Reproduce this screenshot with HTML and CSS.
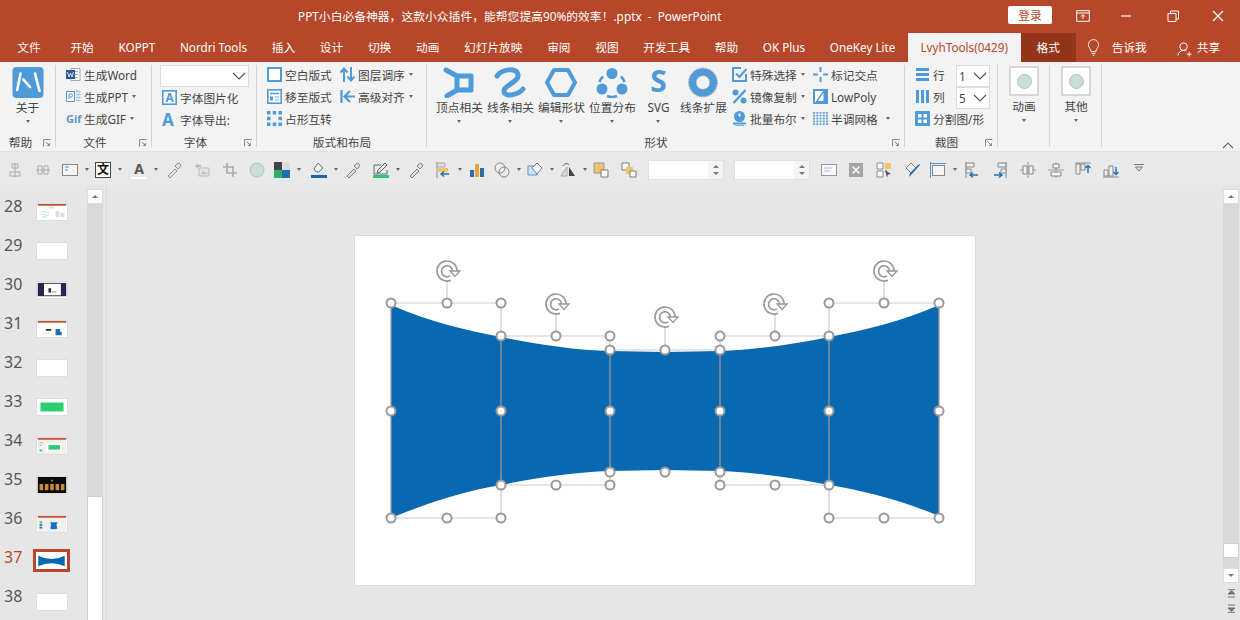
FILE: index.html
```html
<!DOCTYPE html>
<html lang="zh-CN">
  <head>
    <meta charset="UTF-8" />
    <title>PowerPoint</title>
    <link rel="stylesheet" href="styles.css">
  </head>
  <body>
    <!-- title bar -->
    <div class="titlebar">
      <span class="doc-title">PPT小白必备神器，这款小众插件，能帮您提高90%的效率！.pptx&nbsp; - &nbsp;PowerPoint</span>
      <span class="login">登录</span>
      <svg class="win win-a" viewBox="0 0 14 12"><path d="M.7.7h12.6v10.6H.7zM.7 3h12.6" fill="none" stroke="#fff"/><path d="M7 9V5M5 6.600 7 4.600l2 2" fill="none" stroke="#fff"/></svg>
      <svg class="win win-b" viewBox="0 0 14 12"><path d="M2 6h10" stroke="#fff" stroke-width="1.200"/></svg>
      <svg class="win win-c" viewBox="0 0 14 12"><path d="M2 3.500h8v8H2zM4.500 3.500V1h8v8H10" fill="none" stroke="#fff"/></svg>
      <svg class="win win-d" viewBox="0 0 12 12"><path d="M1 1l10 10M11 1 1 11" stroke="#fff" stroke-width="1.200"/></svg>
    </div>

    <!-- ribbon tabs -->
    <div class="tabs">
      <span class="tab tab-file">文件</span>
      <span class="tab">开始</span>
      <span class="tab">KOPPT</span>
      <span class="tab">Nordri Tools</span>
      <span class="tab">插入</span>
      <span class="tab">设计</span>
      <span class="tab">切换</span>
      <span class="tab">动画</span>
      <span class="tab">幻灯片放映</span>
      <span class="tab">审阅</span>
      <span class="tab">视图</span>
      <span class="tab">开发工具</span>
      <span class="tab">帮助</span>
      <span class="tab">OK Plus</span>
      <span class="tab">OneKey Lite</span>
      <span class="tab tab-active">LvyhTools(0429)</span>
      <span class="tab tab-format">格式</span>
      <svg class="tab-bulb" viewBox="0 0 14 18"><path d="M4.500 13.500C4.500 10.500 1.500 9.500 1.500 6a5.500 5.500 0 0 1 11 0c0 3.500-3 4.500-3 7.500zM5 15.500h4M6 17.300h2" fill="none" stroke="#fff"/></svg>
      <span class="tab-tell">告诉我</span>
      <svg class="tab-user" viewBox="0 0 16 16"><circle cx="7" cy="5.500" r="4" fill="none" stroke="#fff"/><path d="M1 15c.5-3.500 3-5.500 6-5.500 1 0 2 .2 2.800.7M10.500 13.500h5M13 11v5" fill="none" stroke="#fff"/></svg>
      <span class="tab-share">共享</span>
    </div>

    <!-- ribbon -->
    <div class="ribbon">
      <div class="group">
        <div class="group-body">
          <div class="big big-about">
            <svg class="big-icon" viewBox="0 0 31 31"><rect width="31" height="31" rx="4" fill="#4f9ad8"/><path d="M8 6.500 4.700 23M10.800 12.500l6.700 7.500M22.500 6.500 27 24" stroke="#fff" stroke-width="2.600" stroke-linecap="round" fill="none"/></svg>
            <span>关于</span>
            <i class="caret"></i>
          </div>
        </div>
        <div class="group-label label-help">帮助</div>
        <svg class="launcher" viewBox="0 0 8 8"><path d="M.5 7.500v-7h7M2.500 2.500l4 4M6.500 4v2.500H4" fill="none" stroke="#888"/></svg>
      </div>

      <div class="group">
        <div class="group-body pad-file">
          <div class="col">
            <div class="row">
              <svg class="ico" viewBox="0 0 15 15"><path d="M5 1.500h9v12H5z" fill="#fff" stroke="#9ab"/><path d="M8 4.500h4M8 7.500h4M8 10.500h4" stroke="#9ab"/><rect y="3" width="9" height="9" fill="#2b5797"/><path d="M1.500 5 3 10l1.500-4L6 10l1.500-5" fill="none" stroke="#fff" stroke-width=".8"/></svg>
              <span>生成Word</span>
            </div>
            <div class="row">
              <svg class="ico" viewBox="0 0 15 15"><path d="M.5 2.500h8v10h-8z" fill="#fff" stroke="#4f9ad8"/><path d="M3 10V5h2a1.300 1.300 0 0 1 0 3H3" fill="none" stroke="#4f9ad8"/><path d="M10 2.500h4.500M10 5.500h4.500M10 8.500h4.500M10 11.500h4.500" stroke="#9cc4e6" stroke-width="1.300"/></svg>
              <span>生成PPT</span><i class="caret caret-in"></i>
            </div>
            <div class="row">
              <span class="gif">Gif</span>
              <span>生成GIF</span><i class="caret caret-in"></i>
            </div>
          </div>
        </div>
        <div class="group-label label-left">文件</div>
        <svg class="launcher" viewBox="0 0 8 8"><path d="M.5 7.500v-7h7M2.500 2.500l4 4M6.500 4v2.500H4" fill="none" stroke="#888"/></svg>
      </div>

      <div class="group">
        <div class="group-body pad-font">
          <div class="combo combo-font">
            <svg class="chev" viewBox="0 0 14 8"><path d="M1 1l6 6 6-6" fill="none" stroke="#555" stroke-width="1.200"/></svg>
          </div>
          <div class="row row-font">
            <svg class="ico" viewBox="0 0 15 15"><rect x=".8" y=".8" width="13.400" height="13.400" fill="#fff" stroke="#4f9ad8" stroke-width="1.600"/></svg>
            <span class="ico-letter">A</span>
            <span>字体图片化</span>
          </div>
          <div class="row row-font">
            <span class="font-a">A</span>
            <span>字体导出:</span>
          </div>
        </div>
        <div class="group-label label-left">字体</div>
        <svg class="launcher" viewBox="0 0 8 8"><path d="M.5 7.500v-7h7M2.500 2.500l4 4M6.500 4v2.500H4" fill="none" stroke="#888"/></svg>
      </div>

      <div class="group">
        <div class="group-body pad-layout">
          <div class="col col-layout">
            <div class="row">
              <svg class="ico" viewBox="0 0 15 15"><rect x="1" y="1" width="13" height="13" fill="#fff" stroke="#4f9ad8" stroke-width="2"/></svg>
              <span>空白版式</span>
            </div>
            <div class="row">
              <svg class="ico" viewBox="0 0 15 15"><rect x=".8" y=".8" width="13.400" height="13.400" fill="#fff" stroke="#4f9ad8" stroke-width="1.600"/><path d="M3 4.500h9" stroke="#4f9ad8" stroke-width="1.500"/><path d="M3 7.500h3v4H3z" fill="#4f9ad8"/><path d="M8 8h4M8 11h4" stroke="#7d9fbc"/></svg>
              <span>移至版式</span>
            </div>
            <div class="row">
              <svg class="ico" viewBox="0 0 15 15"><path d="M0 0h3.500v3.500H0zM5.700 0h3.500v3.500H5.700zM11.500 0H15v3.500h-3.500zM0 5.700h3.500v3.500H0zM11.500 5.700H15v3.500h-3.500zM0 11.500h3.500V15H0zM5.700 11.500h3.500V15H5.700zM11.500 11.500H15V15h-3.500z" fill="#4f9ad8"/></svg>
              <span>占形互转</span>
            </div>
          </div>
          <div class="col">
            <div class="row">
              <svg class="ico" viewBox="0 0 15 15"><path d="M4 15V2M.5 5.500 4 1.500l3.500 4M11 0v13M7.500 9.500l3.500 4 3.500-4" fill="none" stroke="#4f9ad8" stroke-width="2"/></svg>
              <span>图层调序</span><i class="caret caret-in"></i>
            </div>
            <div class="row">
              <svg class="ico" viewBox="0 0 15 15"><path d="M1.500 1v13M15 7.500H5M10 2 4.500 7.500 10 13" fill="none" stroke="#4f9ad8" stroke-width="2.200"/></svg>
              <span>高级对齐</span><i class="caret caret-in"></i>
            </div>
          </div>
        </div>
        <div class="group-label">版式和布局</div>
      </div>

      <div class="group">
        <div class="group-body pad-shape">
          <div class="big-grid">
            <div class="big">
              <svg class="big-icon" viewBox="0 0 32 31"><path d="M3 3l11 6h14v14H14L4 29M14 9v14" fill="none" stroke="#4f9ad8" stroke-width="5" stroke-linecap="round" stroke-linejoin="round"/></svg>
              <span>顶点相关</span><i class="caret"></i>
            </div>
            <div class="big">
              <svg class="big-icon" viewBox="0 0 32 31"><path d="M3 9C8 2 23 0 24 8 25 15 10 18 10 24c0 7 14 4 19-2" fill="none" stroke="#4f9ad8" stroke-width="5" stroke-linecap="round"/></svg>
              <span>线条相关</span><i class="caret"></i>
            </div>
            <div class="big">
              <svg class="big-icon" viewBox="0 0 32 31"><path d="M9 3h14l7 12.500L23 28H9L2 15.500z" fill="none" stroke="#4f9ad8" stroke-width="4" stroke-linejoin="round"/></svg>
              <span>编辑形状</span><i class="caret"></i>
            </div>
            <div class="big">
              <svg class="big-icon" viewBox="0 0 32 31"><g fill="#4f9ad8"><circle cx="16" cy="6.500" r="5.500"/><circle cx="6" cy="22" r="5.500"/><circle cx="26" cy="22" r="5.500"/></g><path d="M7 9.500A14 14 0 0 0 3.500 15M25 9.500a14 14 0 0 1 3.500 5.500M11 29a14 14 0 0 0 10 0" fill="none" stroke="#4f9ad8" stroke-width="2.500"/></svg>
              <span>位置分布</span><i class="caret"></i>
            </div>
            <div class="big">
              <span class="svg-s">S</span>
              <span>SVG</span><i class="caret"></i>
            </div>
            <div class="big">
              <svg class="big-icon" viewBox="0 0 32 31"><circle cx="16" cy="15.500" r="14.200" fill="none" stroke="#a5a5a5" stroke-width="1.600" stroke-dasharray="1 .8"/><circle cx="16" cy="15.500" r="6.800" fill="none" stroke="#a5a5a5" stroke-width="1.200" stroke-dasharray="1 .8"/><circle cx="16" cy="15.500" r="10.500" fill="none" stroke="#4f9ad8" stroke-width="7"/></svg>
              <span>线条扩展</span>
            </div>
          </div>
          <div class="col col-special">
            <div class="row">
              <svg class="ico" viewBox="0 0 15 15"><path d="M14 7v7H1V1h8" fill="none" stroke="#4f9ad8" stroke-width="2"/><path d="M4 6.500 7.500 10 14.500 2" fill="none" stroke="#4f9ad8" stroke-width="2"/></svg>
              <span>特殊选择</span><i class="caret caret-in"></i>
            </div>
            <div class="row">
              <svg class="ico" viewBox="0 0 15 15"><circle cx="3.500" cy="3.500" r="3" fill="#4f9ad8"/><circle cx="11.500" cy="11.500" r="3" fill="#4f9ad8"/><path d="M13.500 1 1.500 14" stroke="#4f9ad8" stroke-width="2.400"/></svg>
              <span>镜像复制</span><i class="caret caret-in"></i>
            </div>
            <div class="row">
              <svg class="ico" viewBox="0 0 15 15"><circle cx="7.500" cy="5.500" r="5.500" fill="#4f9ad8"/><path d="M7.500 2.500v3" stroke="#fff" stroke-width="2"/><path d="M1 12.500h13" stroke="#4f9ad8" stroke-width="2"/><path d="M3 14.800h9" stroke="#4f9ad8"/></svg>
              <span>批量布尔</span><i class="caret caret-in"></i>
            </div>
          </div>
          <div class="col">
            <div class="row">
              <svg class="ico" viewBox="0 0 15 15"><path d="M7.500 0v5M7.500 10v5M0 7.500h5M10 7.500h5" stroke="#4f9ad8" stroke-width="2"/></svg>
              <span>标记交点</span>
            </div>
            <div class="row">
              <svg class="ico" viewBox="0 0 15 15"><rect x="1" y="1" width="13" height="13" fill="#fff" stroke="#4f9ad8" stroke-width="2"/><path d="M2 14 10 2h4v12z" fill="#4f9ad8"/><path d="M5 12 10.500 4v8z" fill="#fff"/></svg>
              <span>LowPoly</span>
            </div>
            <div class="row">
              <svg class="ico" viewBox="0 0 15 15"><path d="M1 1v13M4.300 1v13M7.500 1v13M10.800 1v13M14 1v13" stroke="#4f9ad8" stroke-width="1.800" stroke-dasharray="1.800 1"/></svg>
              <span>半调网格</span><i class="caret caret-far"></i>
            </div>
          </div>
        </div>
        <div class="group-label label-shape">形状</div>
        <svg class="launcher" viewBox="0 0 8 8"><path d="M.5 7.500v-7h7M2.500 2.500l4 4M6.500 4v2.500H4" fill="none" stroke="#888"/></svg>
      </div>

      <div class="group">
        <div class="group-body pad-crop">
          <div class="col">
            <div class="crop-row">
              <div class="row">
                <svg class="ico" viewBox="0 0 15 15"><path d="M1 1h13v3H1zM1 6h13v3H1zM1 11h13v3H1z" fill="#4f9ad8"/></svg>
                <span>行</span>
              </div>
              <div class="combo combo-num"><span>1</span><svg class="chev" viewBox="0 0 14 8"><path d="M1 1l6 6 6-6" fill="none" stroke="#555" stroke-width="1.200"/></svg></div>
            </div>
            <div class="crop-row">
              <div class="row">
                <svg class="ico" viewBox="0 0 15 15"><path d="M1 1h3v13H1zM6 1h3v13H6zM11 1h3v13h-3z" fill="#4f9ad8"/></svg>
                <span>列</span>
              </div>
              <div class="combo combo-num"><span>5</span><svg class="chev" viewBox="0 0 14 8"><path d="M1 1l6 6 6-6" fill="none" stroke="#555" stroke-width="1.200"/></svg></div>
            </div>
            <div class="row">
              <svg class="ico" viewBox="0 0 15 15"><rect width="15" height="15" rx="1" fill="#4f9ad8"/><path d="M3 3h3.500v3.500H3zM8.500 3H12v3.500H8.500zM3 8.500h3.500V12H3zM8.500 8.500H12V12H8.500z" fill="#fff"/></svg>
              <span>分割图/形</span>
            </div>
          </div>
        </div>
        <div class="group-label label-crop">裁图</div>
        <svg class="launcher" viewBox="0 0 8 8"><path d="M.5 7.500v-7h7M2.500 2.500l4 4M6.500 4v2.500H4" fill="none" stroke="#888"/></svg>
      </div>

      <div class="group group-swatch">
        <div class="swatch"><i></i></div>
        <span>动画</span>
        <i class="caret"></i>
      </div>
      <div class="group group-swatch">
        <div class="swatch"><i></i></div>
        <span>其他</span>
        <i class="caret"></i>
      </div>
      <div class="ribbon-end">
        <svg class="collapse" viewBox="0 0 12 7"><path d="M1 6l5-5 5 5" fill="none" stroke="#666" stroke-width="1.100"/></svg>
      </div>
    </div>

    <!-- quick access bar -->
    <div class="quick">
      <div class="qb"><svg viewBox="0 0 16 16"><path d="M8 1v14M5 2h6v4H5zM3 10h10v4H3z" fill="none" stroke="#aaa"/></svg></div>
      <div class="qb"><svg viewBox="0 0 16 16"><path d="M1 8h14M3 4h4v8H3zM9 4h4v8H9z" fill="#eee" stroke="#aaa"/></svg></div>
      <div class="qb"><svg viewBox="0 0 16 16"><rect x=".5" y="2.500" width="15" height="11" fill="#f4f4f4" stroke="#888"/><path d="M3 5h4M3 8h3" stroke="#4f9ad8"/></svg><i class="caret"></i></div>
      <div class="qb"><span class="qb-text">文</span><i class="caret"></i></div>
      <div class="qb"><span class="qb-a">A</span><i class="caret"></i></div>
      <div class="qb"><svg viewBox="0 0 16 16"><path d="M2 14l7-7 2 2-7 7zM9 4l3 3 2-2a1.500 1.500 0 0 0-3-3z" fill="#e4e4e4" stroke="#777" stroke-width=".8"/></svg></div>
      <div class="qb"><svg viewBox="0 0 16 16"><path d="M5 6h10v8H5z" fill="#e3e3e3" stroke="#bbb"/><path d="M7 12l2-3 2 2 1-1 2 2zM1 4l3-3v2h3v2H4v2z" fill="#bbb"/></svg></div>
      <div class="qb"><svg viewBox="0 0 16 16"><path d="M5 1v10h10M1 5h10v10" fill="none" stroke="#aaa" stroke-width="1.600"/></svg></div>
      <div class="qb"><svg viewBox="0 0 16 16"><circle cx="8" cy="8" r="7" fill="#c9ded4" stroke="#aec5bb"/></svg></div>
      <div class="qb"><svg viewBox="0 0 16 16"><path d="M0 0h8v8H0z" fill="#444"/><path d="M8 0h8v8H8z" fill="#ddd"/><path d="M0 8h8v8H0z" fill="#2fae6a"/><path d="M8 8h8v8H8z" fill="#1c6fb5"/></svg><i class="caret"></i></div>
      <div class="qb"><svg viewBox="0 0 16 16"><path d="M7 1l5 5-4 4H5L3 7z" fill="#eee" stroke="#777"/><path d="M0 13h16v3H0z" fill="#1465ad"/></svg><i class="caret"></i></div>
      <div class="qb"><svg viewBox="0 0 16 16"><path d="M2 14l7-7 2 2-7 7zM9 4l3 3 2-2a1.500 1.500 0 0 0-3-3z" fill="#ddd" stroke="#666" stroke-width=".8"/></svg></div>
      <div class="qb"><svg viewBox="0 0 16 16"><path d="M12 1l2 2-7 7-3 1 1-3zM1 3h7M1 3v9h13V8" fill="none" stroke="#666"/><path d="M0 13h16v3H0z" fill="#2fc46f"/></svg><i class="caret"></i></div>
      <div class="qb"><svg viewBox="0 0 16 16"><path d="M2 14l7-7 2 2-7 7zM9 4l3 3 2-2a1.500 1.500 0 0 0-3-3z" fill="#ddd" stroke="#666" stroke-width=".8"/></svg></div>
      <div class="qb"><svg viewBox="0 0 16 16"><path d="M2 0v16" stroke="#888"/><path d="M2 1h8v4H2z" fill="#ddd" stroke="#aaa"/><path d="M2 6h11v4H2z" fill="#f0c36d"/><path d="M14 12H6M9 9.500 6 12l3 2.500" fill="none" stroke="#1c6fb5" stroke-width="1.400"/></svg><i class="caret"></i></div>
      <div class="qb"><svg viewBox="0 0 16 16"><path d="M1 8h4v7H1zM11 6h4v9h-4z" fill="#2f6fa8"/><path d="M6 2h4v13H6z" fill="#e8a23a"/></svg></div>
      <div class="qb"><svg viewBox="0 0 16 16"><circle cx="6" cy="6" r="5" fill="#eee" stroke="#888"/><circle cx="10" cy="10" r="5" fill="none" stroke="#888"/></svg><i class="caret"></i></div>
      <div class="qb"><svg viewBox="0 0 16 16"><path d="M1 4h9v9H1z" fill="#cfe2f3" stroke="#4f9ad8"/><path d="M10 1l5 5-5 6-5-6z" fill="#fff" stroke="#777"/></svg><i class="caret"></i></div>
      <div class="qb"><svg viewBox="0 0 16 16"><path d="M7 5v9H1z" fill="#ddd" stroke="#aaa"/><path d="M9 5v9h6z" fill="#444"/><path d="M3 4c1-3 5-3 6-1" fill="none" stroke="#1c6fb5"/></svg><i class="caret"></i></div>
      <div class="qb"><svg viewBox="0 0 16 16"><path d="M1 1h10v10H1z" fill="#f0c36d" stroke="#999"/><path d="M8 8h7v7H8z" fill="#fff" stroke="#777"/></svg></div>
      <div class="qb"><svg viewBox="0 0 16 16"><path d="M1 1h7v7H1z" fill="#fff" stroke="#777"/><path d="M5 5h7v7H5z" fill="#f0c36d"/><path d="M9 9h6v6H9z" fill="#fff" stroke="#777"/></svg></div>
      <div class="spin"><i></i><div class="spin-btn"><b class="up"></b><b class="down"></b></div></div>
      <div class="spin"><i></i><div class="spin-btn"><b class="up"></b><b class="down"></b></div></div>
      <div class="qb"><svg viewBox="0 0 16 16"><rect x=".5" y="2.500" width="15" height="11" fill="#f7f7f7" stroke="#999"/><path d="M3 6h8M3 9h6" stroke="#a9c6df"/></svg></div>
      <div class="qb"><svg viewBox="0 0 16 16"><rect x="1" y="1" width="14" height="14" fill="#a5a5a5"/><path d="M4.500 4.500l7 7M11.500 4.500l-7 7" stroke="#fff" stroke-width="1.500"/></svg></div>
      <div class="qb"><svg viewBox="0 0 16 16"><path d="M1 1h6v6H1zM1 9h6v6H1zM9 9h2" fill="#fff" stroke="#888"/><path d="M9 1h6v6H9z" fill="#f0c36d"/><path d="M9 8l6 4-3 .5-1 3z" fill="#555"/></svg></div>
      <div class="qb"><svg viewBox="0 0 16 16"><path d="M6 1 1 6l5 5 5-5z" fill="#eee" stroke="#777"/><path d="M15 3 7 12l-3 3 1-4 9-9z" fill="#2f6fa8"/></svg></div>
      <div class="qb"><svg viewBox="0 0 16 16"><rect x="2.500" y="3.500" width="12" height="10" fill="#f5f5f5" stroke="#888"/><path d="M0 1.500h16M.5 0v16" stroke="#4f9ad8"/></svg><i class="caret"></i></div>
      <div class="qb"><svg viewBox="0 0 16 16"><path d="M2 0v16" stroke="#888"/><path d="M2 1h8v4H2zM2 7h5v4H2z" fill="#eee" stroke="#888"/><path d="M14 13H6M9 10.500 6 13l3 2.500" fill="none" stroke="#1c6fb5" stroke-width="1.400"/></svg></div>
      <div class="qb"><svg viewBox="0 0 16 16"><path d="M14 0v16" stroke="#888"/><path d="M6 1h8v4H6zM9 7h5v4H9z" fill="#eee" stroke="#888"/><path d="M2 13h8M7 10.500 10 13l-3 2.500" fill="none" stroke="#1c6fb5" stroke-width="1.400"/></svg></div>
      <div class="qb"><svg viewBox="0 0 16 16"><path d="M8 0v16M0 8h3M13 8h3" stroke="#999"/><path d="M3 4h4v8H3zM9 4h4v8H9z" fill="#f2f2f2" stroke="#888"/></svg></div>
      <div class="qb"><svg viewBox="0 0 16 16"><path d="M8 0v16M0 8h16" stroke="#999"/><path d="M5 2h6v4H5zM3 10h10v4H3z" fill="#f2f2f2" stroke="#888"/></svg></div>
      <div class="qb"><svg viewBox="0 0 16 16"><path d="M0 1h16" stroke="#888"/><path d="M1 2h4v10H1zM6 2h4v6H6z" fill="#eee" stroke="#888"/><path d="M13 11V4M10.500 6 13 3.500 15.500 6" fill="none" stroke="#1c6fb5" stroke-width="1.400"/></svg></div>
      <div class="qb"><svg viewBox="0 0 16 16"><path d="M0 15h16" stroke="#888"/><path d="M1 8h4v6H1zM6 4h4v10H6z" fill="#eee" stroke="#888"/><path d="M13 5v7M10.500 10 13 12.500 15.500 10" fill="none" stroke="#1c6fb5" stroke-width="1.400"/></svg></div>
      <div class="qb"><svg class="qb-more" viewBox="0 0 10 8"><path d="M0 .5h10M1.500 3h7L5 7z" fill="none" stroke="#777"/></svg></div>
    </div>

    <!-- slide panel, stage -->
    <div class="main">
      <div class="thumbs">
        <div class="thumb-row"><span class="num">28</span>
          <svg class="thumb" viewBox="0 0 32 18"><path d="M0 0h32v2H0z" fill="#c0573a"/><path d="M3 9q3-2 5 0t5 0M3 12q3-2 5 0t5 0M5 15q3-2 5 0" fill="none" stroke="#8fdcae" stroke-width=".8"/><path d="M20 8h4v7h-4zM25 10h5v5h-5zM13 3h5v2h-5z" fill="#ddd"/></svg>
        </div>
        <div class="thumb-row"><span class="num">29</span><svg class="thumb" viewBox="0 0 32 18"></svg></div>
        <div class="thumb-row"><span class="num">30</span>
          <svg class="thumb" viewBox="0 0 32 18"><path d="M0 1h32v15H0z" fill="#25264f"/><path d="M7 2h19v13H7z" fill="#fff"/><path d="M12 7h3v5h-3z" fill="#333"/><path d="M16 10h5v2h-5z" fill="#bbb"/></svg>
        </div>
        <div class="thumb-row"><span class="num">31</span>
          <svg class="thumb" viewBox="0 0 32 18"><path d="M0 0h32v2H0z" fill="#c0573a"/><path d="M9 9h6v2H9z" fill="#3a2a10"/><path d="M20 9h5v7h-5z" fill="#1c6fb5"/><path d="M25 12h2v4h-2z" fill="#1c6fb5"/><path d="M5 13h11v1H5z" fill="#ddd"/></svg>
        </div>
        <div class="thumb-row"><span class="num">32</span><svg class="thumb" viewBox="0 0 32 18"></svg></div>
        <div class="thumb-row"><span class="num">33</span>
          <svg class="thumb" viewBox="0 0 32 18"><path d="M3 4h26v10H3z" fill="#2ecc71"/></svg>
        </div>
        <div class="thumb-row"><span class="num">34</span>
          <svg class="thumb" viewBox="0 0 32 18"><path d="M0 0h32v18H0z" fill="#efefef"/><path d="M0 0h32v2H0z" fill="#c0573a"/><path d="M9 6h18v10H9z" fill="#fff"/><path d="M12 8h13v5H12z" fill="#2ecc71"/><path d="M2 13h3v2H2z" fill="#2ecc71"/><path d="M2 5h4v1H2zM2 8h2v1H2z" fill="#aaa"/></svg>
        </div>
        <div class="thumb-row"><span class="num">35</span>
          <svg class="thumb" viewBox="0 0 32 18"><path d="M0 0h32v18H0z" fill="#0c0a06"/><path d="M2 8h4v7H2zM8 8h4v7H8zM14 8h4v7h-4zM20 8h4v7h-4zM26 8h4v7h-4z" fill="#c98a3a"/><path d="M15 3h2v2h-2z" fill="#c98a3a"/></svg>
        </div>
        <div class="thumb-row"><span class="num">36</span>
          <svg class="thumb" viewBox="0 0 32 18"><path d="M0 0h32v18H0z" fill="#efefef"/><path d="M0 0h32v2H0z" fill="#c0573a"/><path d="M14 7h8l-1 3 1 4q-4 2-8 0l1-4z" fill="#1c6fb5"/><path d="M2 9h3v2H2zM2 12h3v2H2z" fill="#1c6fb5"/><path d="M2 6h3v2H2z" fill="#2ecc71"/></svg>
        </div>
        <div class="thumb-row"><span class="num num-on">37</span>
          <div class="thumb-on">
            <svg viewBox="0 0 32 18"><path d="M2 4Q16 11 30 4V15Q16 9 2 15z" fill="#0868b0"/></svg>
          </div>
        </div>
        <div class="thumb-row"><span class="num">38</span><svg class="thumb" viewBox="0 0 32 18"></svg></div>
      </div>

      <div class="vbar vbar-left">
        <div class="vbtn"><b class="up"></b></div>
        <div class="vtrack vtrack-left"></div>
        <div class="vthumb vthumb-left"></div>
      </div>

      <div class="stage">
        <svg class="slide" viewBox="355 236 620 349">
          <defs>
            <g id="rot">
              <path d="M10 0A10 10 0 1 0 4 9.200M5.500 0A5.500 5.500 0 1 0 3 4.900" fill="none" stroke="#999" stroke-width="1.700"/>
              <path d="M3 0h10L8 5.500z" fill="#fff" stroke="#999" stroke-width="1.300"/>
            </g>
            <circle id="h" r="4.500" fill="#fff" stroke="#999" stroke-width="2"/>
          </defs>

          <path d="M391 305C430 322 465 330 501 337 535 344 575 350 610 351L665 352 720 351C755 350 795 344 829 337 865 330 900 322 939 305V516C900 500 865 491 829 485 795 478 755 472 720 471L665 470 610 471C575 472 535 478 501 485 465 491 430 502 391 518Z" fill="#0868b0"/>

          <g fill="none" stroke="#ccc" stroke-width="1.200">
            <path d="M391 303H501V337M447 303V280M391 518H501V485M501 336H610V350M556 336V314M501 485H610V472M610 350H720V336M665 350V327M829 303H939M884 303V280M829 303V337M829 518H939M829 518V485M720 336H829M775 336V314M720 485H829M720 472V485"/>
          </g>
          <g fill="none" stroke="#9a9a9a" stroke-width="1.300">
            <path d="M391 305V518M501 337V485M610 350V472M720 350V472M829 337V485M939 305V518"/>
          </g>

          <use href="#rot" x="447" y="271"/>
          <use href="#rot" x="556" y="304"/>
          <use href="#rot" x="665" y="317"/>
          <use href="#rot" x="774" y="304"/>
          <use href="#rot" x="884" y="271"/>

          <use href="#h" x="391" y="303"/><use href="#h" x="447" y="303"/><use href="#h" x="501" y="303"/>
          <use href="#h" x="391" y="411"/><use href="#h" x="501" y="411"/>
          <use href="#h" x="391" y="518"/><use href="#h" x="447" y="518"/><use href="#h" x="501" y="518"/>
          <use href="#h" x="501" y="336"/><use href="#h" x="556" y="336"/><use href="#h" x="610" y="336"/>
          <use href="#h" x="610" y="411"/>
          <use href="#h" x="501" y="485"/><use href="#h" x="556" y="485"/><use href="#h" x="610" y="485"/>
          <use href="#h" x="610" y="350"/><use href="#h" x="665" y="350"/><use href="#h" x="720" y="350"/>
          <use href="#h" x="720" y="411"/>
          <use href="#h" x="610" y="472"/><use href="#h" x="665" y="472"/><use href="#h" x="720" y="472"/>
          <use href="#h" x="720" y="336"/><use href="#h" x="775" y="336"/><use href="#h" x="829" y="336"/>
          <use href="#h" x="829" y="411"/>
          <use href="#h" x="720" y="485"/><use href="#h" x="775" y="485"/><use href="#h" x="829" y="485"/>
          <use href="#h" x="829" y="303"/><use href="#h" x="884" y="303"/><use href="#h" x="939" y="303"/>
          <use href="#h" x="939" y="411"/>
          <use href="#h" x="829" y="518"/><use href="#h" x="884" y="518"/><use href="#h" x="939" y="518"/>
        </svg>
      </div>

      <div class="vbar vbar-right">
        <div class="vbtn"><b class="up"></b></div>
        <div class="vtrack vtrack-right"></div>
        <div class="vthumb vthumb-right"></div>
        <div class="vtrack vtrack-gap"></div>
        <div class="vbtn"><b class="down"></b></div>
        <svg class="vjump" viewBox="0 0 9 9"><path d="M1 .7h7M4.500 1.500 8 5H1zM1 8h7" fill="#777" stroke="#777"/></svg>
        <svg class="vjump" viewBox="0 0 9 9"><path d="M1 8.300h7M4.500 7.500 8 4H1zM1 1h7" fill="#777" stroke="#777"/></svg>
      </div>
    </div>
  </body>
</html>
```

FILE: styles.css
```css
* {
  margin: 0;
  padding: 0;
  box-sizing: border-box;
}
html,
body {
  height: 620px;
  overflow: hidden;
}
body {
  font-family: "Noto Sans", "Noto Sans CJK SC", sans-serif;
  font-size: 11.7px;
  color: #444;
  background: #e6e6e6;
}
i,
b {
  display: block;
}

/* title bar */
.titlebar {
  display: flex;
  align-items: center;
  height: 31px;
  background: #b7472a;
  color: #fff;
  padding-left: 298px;
}
.doc-title {
  width: 710px;
  font-size: 11.8px;
  white-space: nowrap;
}
.login {
  width: 44px;
  height: 18px;
  margin-top: -1px;
  background: #fff;
  border-radius: 2px;
  color: #b7472a;
  text-align: center;
  line-height: 18px;
}
.win {
  width: 14px;
  height: 12px;
  flex: none;
}
.win-a {
  margin-left: 24px;
}
.win-b {
  margin-left: 29px;
}
.win-c {
  margin-left: 33px;
}
.win-d {
  margin-left: 31px;
}

/* tabs */
.tabs {
  display: flex;
  align-items: flex-end;
  height: 31px;
  background: #b7472a;
  color: #fff;
  white-space: nowrap;
}
.tab {
  height: 29px;
  line-height: 29px;
  padding: 0 12.35px;
}
.tab-file {
  margin: 0 5px;
}
.tab-active {
  width: 113px;
  padding: 0;
  text-align: center;
  background: #f3f3f3;
  color: #b7472a;
}
.tab-format {
  width: 55px;
  padding: 0;
  text-align: center;
  background: #933518;
}
.tab-bulb {
  width: 13px;
  height: 17px;
  margin: 0 0 6px 11px;
}
.tab-tell {
  height: 29px;
  line-height: 29px;
  margin-left: 12px;
}
.tab-user {
  width: 15px;
  height: 16px;
  margin: 0 0 5px 30px;
}
.tab-share {
  height: 29px;
  line-height: 29px;
  margin-left: 5px;
}

/* ribbon */
.ribbon {
  display: grid;
  grid-template-columns: 56px 96px 105px 170px 478px 93px 52px 52px 1fr;
  height: 90px;
  padding-top: 2px;
  background: #f3f3f3;
  border-bottom: 1px solid #e2e2e2;
}
.group {
  position: relative;
  display: flex;
  flex-direction: column;
}
.group::after {
  content: "";
  position: absolute;
  right: 0;
  top: 1px;
  bottom: 4px;
  width: 1px;
  background: #d4d4d4;
}
.group-body {
  display: flex;
  height: 69px;
}
.group-label {
  text-align: center;
  line-height: 18px;
}
.label-help {
  padding-right: 15px;
}
.label-left {
  padding-right: 18px;
}
.label-shape {
  padding-right: 20px;
}
.label-crop {
  padding-right: 10px;
}
.launcher {
  position: absolute;
  right: 5px;
  bottom: 4px;
  width: 8px;
  height: 8px;
}
.row {
  display: flex;
  align-items: center;
  height: 22px;
  line-height: 20px;
  padding-bottom: 1px;
  white-space: nowrap;
}
.ico {
  width: 15px;
  height: 15px;
  margin-right: 3px;
  flex: none;
}
.col {
  display: flex;
  flex-direction: column;
}
.caret {
  width: 0;
  height: 0;
  border: 2.5px solid transparent;
  border-top: 3px solid #666;
  border-bottom: 0;
}
.caret-in {
  margin-left: 4px;
}
.caret-far {
  margin-left: 8px;
}
.big {
  display: flex;
  flex-direction: column;
  align-items: center;
  padding-top: 3px;
  white-space: nowrap;
}
.big span {
  height: 19px;
  line-height: 19px;
}
.big .caret {
  margin-top: 3px;
}
.big-icon {
  width: 32px;
  height: 31px;
}
.big-about {
  width: 55px;
}
.gif {
  width: 18px;
  color: #5f97c5;
  font-weight: 700;
  font-size: 11px;
}
.pad-file {
  padding-left: 10px;
}
.pad-font {
  flex-direction: column;
  padding-left: 8px;
}
.combo {
  position: relative;
  display: flex;
  align-items: center;
  background: #fff;
  border: 1px solid #dcdcdc;
}
.combo-font {
  width: 89px;
  height: 22px;
  margin-top: 1px;
  flex: none;
}
.chev {
  position: absolute;
  right: 2px;
  width: 14px;
  height: 8px;
}
.row-font {
  position: relative;
  margin-left: 2px;
}
.ico-letter {
  position: absolute;
  left: 3.500px;
  top: 2px;
  font-weight: 700;
  color: #4f9ad8;
  line-height: 17px;
}
.font-a {
  width: 18px;
  font-size: 17px;
  line-height: 20px;
  font-weight: 700;
  color: #4f9ad8;
}
.pad-layout {
  padding-left: 10px;
}
.col-layout {
  width: 73px;
}
.pad-shape {
  padding-left: 7px;
}
.big-grid {
  display: grid;
  grid-template-columns: 51px 51px 51px 51px 41px 49px;
  justify-items: center;
}
.big .svg-s {
  font-size: 30px;
  font-weight: 700;
  color: #4f9ad8;
  height: 31px;
  line-height: 28px;
}
.col-special {
  width: 81px;
  margin-left: 4px;
}
.pad-crop {
  padding-left: 10px;
}
.crop-row {
  display: flex;
  align-items: center;
  height: 22px;
  width: 75px;
  justify-content: space-between;
}
.combo-num {
  width: 34px;
  height: 22px;
  margin-top: 2px;
  padding-left: 2px;
}
.group-swatch {
  align-items: center;
  padding-top: 2px;
}
.group-swatch span {
  line-height: 20px;
}
.group-swatch .caret {
  margin-top: 3px;
}
.swatch {
  display: flex;
  align-items: center;
  justify-content: center;
  width: 30px;
  height: 30px;
  background: #fff;
  border: 2px solid #d6d6d6;
}
.swatch i {
  width: 15px;
  height: 15px;
  border-radius: 50%;
  background: #c9ded4;
  border: 1px solid #aec5bb;
}
.ribbon-end {
  display: flex;
  align-items: flex-end;
  justify-content: flex-end;
  padding: 0 6px 2px 0;
}
.collapse {
  width: 12px;
  height: 7px;
}

/* quick access bar */
.quick {
  display: grid;
  grid-template-columns: 28px 27px 33px 36px 35px 28px 28px 27px 25px 37px 34px 28px 35px 27px 34px 25px 33px 33px 33px 28px 33px 86px 81px 27px 28px 29px 25px 34px 28px 28px 28px 27px 28px 28px 28px;
  align-items: center;
  height: 33px;
  padding: 2px 0 0 1px;
  background: #e9e9e9;
}
.qb {
  display: flex;
  align-items: center;
  height: 20px;
  padding-left: 6px;
}
.qb svg {
  width: 16px;
  height: 16px;
  flex: none;
}
.qb .caret {
  margin-left: 7px;
  flex: none;
}
.qb svg.qb-more {
  width: 10px;
  height: 8px;
  margin: -4px 0 0 3px;
}
.qb-text {
  width: 16px;
  height: 16px;
  flex: none;
  border: 1px solid #444;
  background: #fff;
  color: #111;
  font-weight: 700;
  font-size: 12px;
  line-height: 14px;
  text-align: center;
}
.qb-a {
  width: 16px;
  flex: none;
  text-align: center;
  font-size: 14px;
  font-weight: 700;
  line-height: 16px;
  color: #555;
  border-bottom: 2px solid #fff;
}
.spin {
  display: flex;
  height: 20px;
  width: 76px;
  background: #f4f4f4;
  border: 1px solid #e0e0e0;
}
.spin i {
  width: 59px;
  background: #fff;
}
.spin-btn {
  flex: 1;
  display: flex;
  flex-direction: column;
  align-items: center;
  justify-content: space-evenly;
}
.up,
.down {
  width: 0;
  height: 0;
  border: 3px solid transparent;
}
.up {
  border-bottom: 3px solid #777;
  border-top: 0;
}
.down {
  border-top: 3px solid #777;
  border-bottom: 0;
}

/* slide panel */
.main {
  display: flex;
  height: 435px;
  overflow: hidden;
}
.thumbs {
  width: 87px;
  padding: 8px 0 0 4px;
  flex: none;
}
.thumb-row {
  display: flex;
  align-items: flex-start;
  height: 39px;
}
.num {
  width: 32px;
  margin-top: 3px;
  font-size: 16px;
  line-height: 20px;
  color: #555;
}
.num-on {
  color: #b7472a;
}
.thumb {
  display: block;
  width: 32px;
  height: 18px;
  margin-top: 10px;
  background: #fff;
  border: 1px solid #ddd;
}
.thumb-on {
  width: 37px;
  height: 23px;
  margin: 5px 0 0 -3px;
  background: #fff;
  border: 3px solid #b7472a;
}
.thumb-on svg {
  display: block;
  width: 100%;
  height: 100%;
}

/* scroll bars */
.vbar {
  display: flex;
  flex-direction: column;
  align-items: center;
  width: 16px;
  padding-top: 4px;
  flex: none;
}
.vbar-right {
  margin-right: 1px;
}
.vbtn {
  display: flex;
  align-items: center;
  justify-content: center;
  width: 16px;
  height: 15px;
  background: #fff;
  border: 1px solid #dcdcdc;
  flex: none;
}
.vtrack {
  width: 16px;
  background: #d9d9d9;
  flex: none;
}
.vthumb {
  width: 16px;
  background: #fff;
  border: 1px solid #cfcfcf;
  flex: none;
}
.vtrack-left {
  height: 292px;
}
.vthumb-left {
  height: 130px;
}
.vtrack-right {
  height: 339px;
}
.vthumb-right {
  height: 15px;
}
.vtrack-gap {
  height: 10px;
}
.vjump {
  width: 9px;
  height: 9px;
  margin-top: 6px;
}

/* stage */
.stage {
  flex: 1;
  margin-left: 3px;
  padding: 51px 0 0 248px;
  border-left: 1px solid #dadada;
}
.slide {
  display: block;
  width: 620px;
  height: 349px;
  background: #fff;
  border: 1px solid #dcdcdc;
  box-sizing: content-box;
  margin: -1px 0 0 -1px;
}
```
